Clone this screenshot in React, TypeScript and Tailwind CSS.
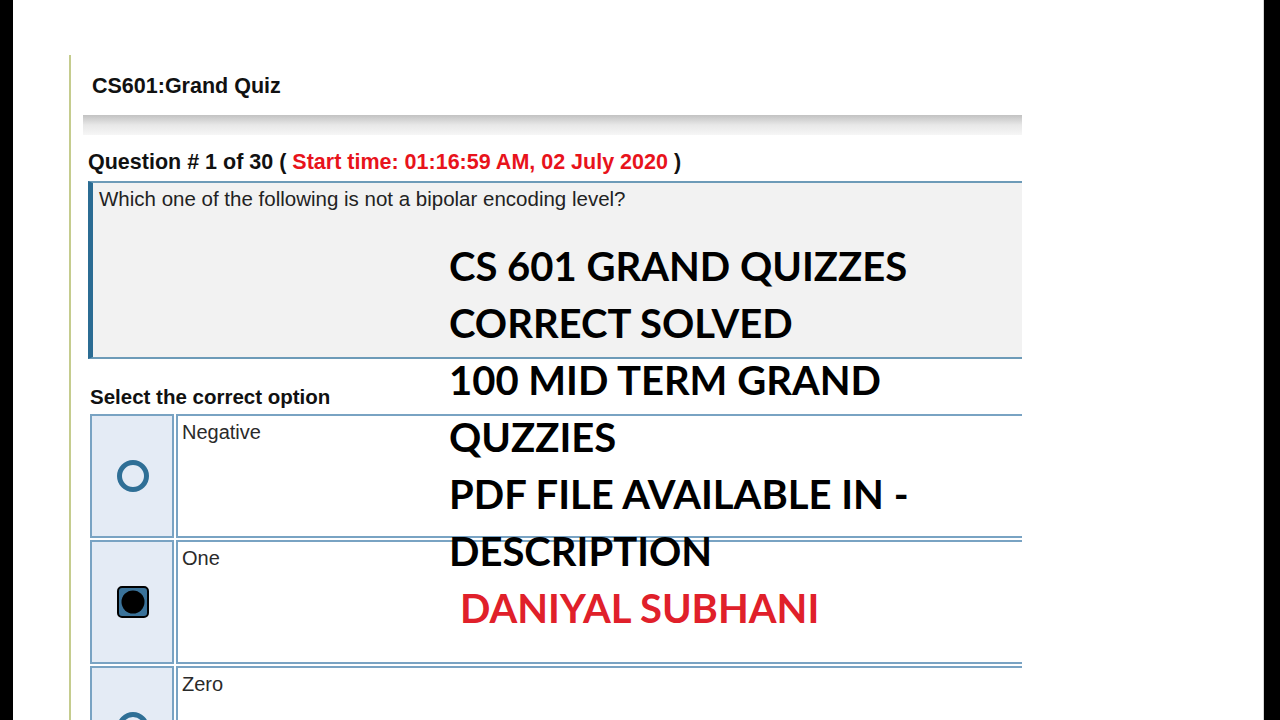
const options = [
  { label: "Negative", checked: false },
  { label: "One", checked: true },
  { label: "Zero", checked: false },
];

const promo = [
  "CS 601 GRAND QUIZZES",
  "CORRECT SOLVED",
  "100 MID TERM GRAND",
  "QUZZIES",
  "PDF FILE AVAILABLE IN -",
  "DESCRIPTION",
];

function Radio({ checked }: { checked: boolean }) {
  if (checked) {
    return (
      <svg width="32" height="32" viewBox="0 0 32 32">
        <rect x="1" y="1" width="30" height="30" rx="4" fill="#3a7299" stroke="#000" strokeWidth="2" />
        <circle cx="16" cy="16" r="11.5" fill="#000" />
      </svg>
    );
  }
  return (
    <svg width="34" height="34" viewBox="0 0 34 34">
      <circle cx="17" cy="17" r="13.5" fill="none" stroke="#2f6f96" strokeWidth="5" />
    </svg>
  );
}

export default function App() {
  return (
    <div className="flex h-[720px] w-[1280px] overflow-hidden bg-white font-['Liberation_Sans',Arial,sans-serif]">
      <div className="w-[13px] bg-black" />
      <main className="relative flex-1 border-r border-[#d6d6d6] bg-white">
        <div className="ml-[56px] mt-[55px] h-full border-l-2 border-[#c5cc8e] pl-[12px]">
          <div className="w-[939px] overflow-hidden">
            <h1 className="pl-[9px] pt-[19px] text-[21.5px] font-bold leading-[24px] text-[#111]">CS601:Grand Quiz</h1>
            <div className="mt-[17px] h-[20px] bg-gradient-to-b from-[#c2c2c2] via-[#e8e8e8] to-[#f6f6f6]" />

            <div className="pl-[5px]">
              <p className="mt-[15px] text-[21.5px] font-bold leading-[24px] text-[#111]">
                Question # 1 of 30 ({" "}
                <span className="text-[#e8131b]">Start time: 01:16:59 AM, 02 July 2020</span> )
              </p>
              <div className="mt-[7px] h-[178px] w-[960px] border-y-2 border-l-[5px] border-[#6d9bb8] border-l-[#2b6c93] bg-[#f2f2f2] pl-[6px] pt-[4px]">
                <p className="text-[20.5px] leading-[23px] text-[#222]">Which one of the following is not a bipolar encoding level?</p>
              </div>
            </div>

            <div className="pl-[7px]">
              <p className="mt-[26px] text-[20.5px] font-bold leading-[24px] text-[#111]">Select the correct option</p>
              <div className="mt-[5px] flex w-[960px] flex-col gap-[2px]">
                {options.map((o) => (
                  <div key={o.label} className="flex h-[124px] gap-[2px]">
                    <div className="flex w-[84px] items-center justify-center border-2 border-[#79a3c3] bg-[#e4ebf5] pl-[1px]">
                      <Radio checked={o.checked} />
                    </div>
                    <div className="flex-1 border-2 border-[#79a3c3] bg-white pl-[4px] pt-[5px]">
                      <span className="text-[20px] leading-[23px] text-[#2a2a2a]">{o.label}</span>
                    </div>
                  </div>
                ))}
              </div>
            </div>
          </div>
        </div>

        {/* promo caption laid over the quiz */}
        <div className="absolute left-[436px] top-[238px] font-['Lato',sans-serif] text-[40px] font-bold leading-[57px] text-black">
          {promo.map((line) => (
            <div key={line}>{line}</div>
          ))}
          <div className="pl-[11px] text-[#e0202a]">DANIYAL SUBHANI</div>
        </div>
      </main>
      <div className="w-[16px] bg-black" />
    </div>
  );
}
